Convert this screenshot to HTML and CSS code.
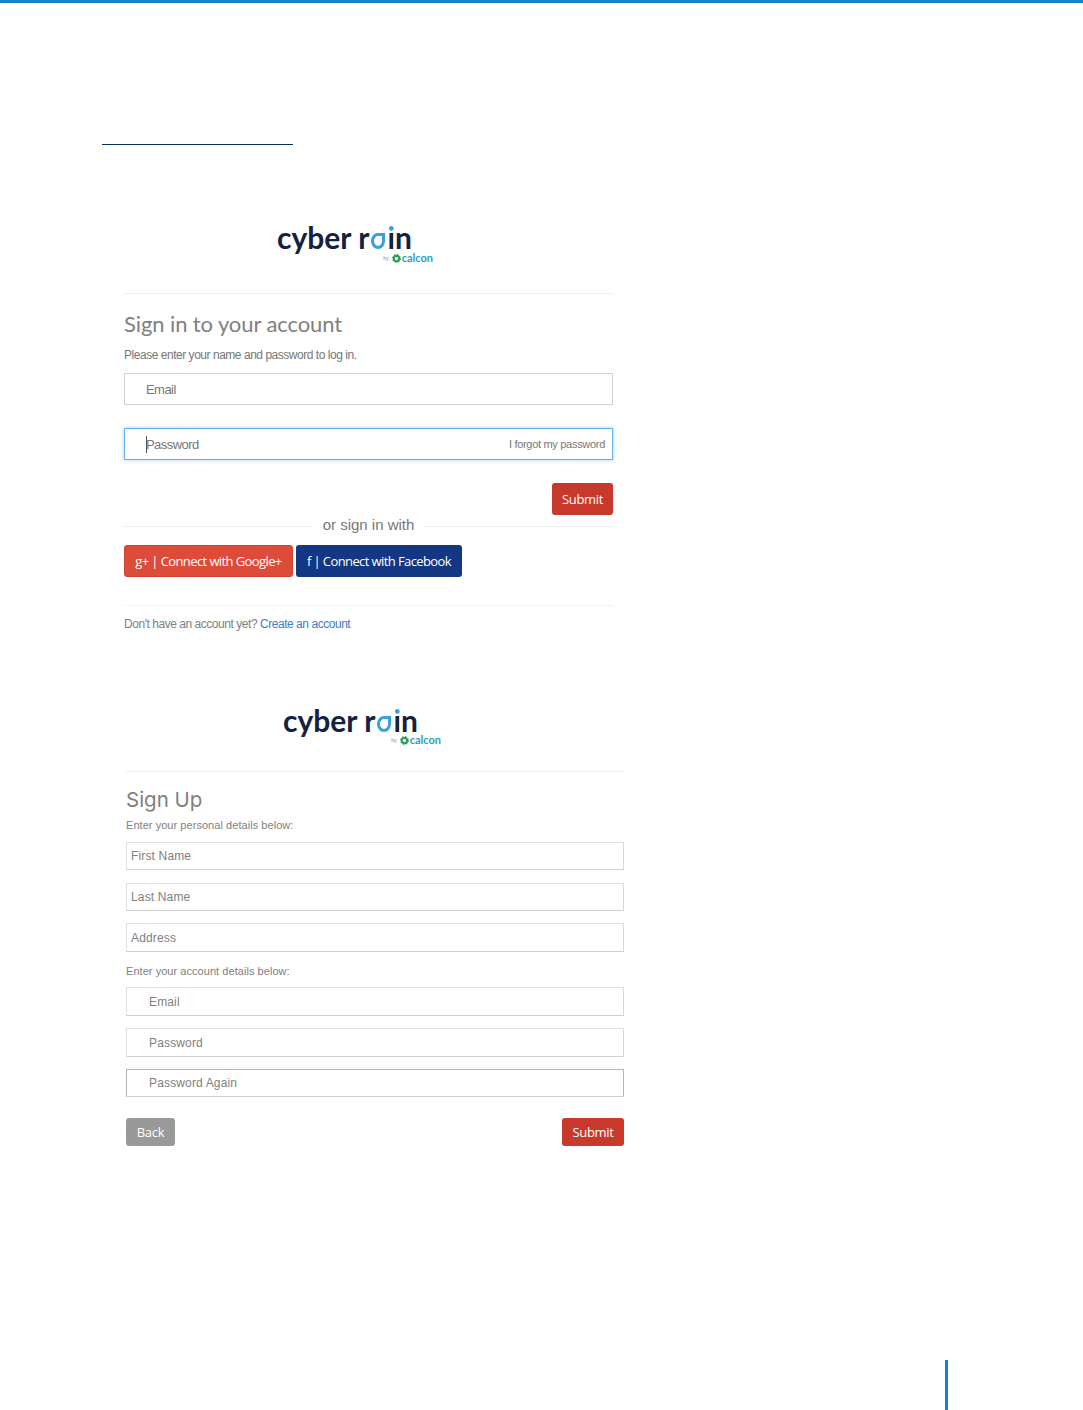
FILE: index.html
```html
<!DOCTYPE html>
<html lang="en">
<head>
    <meta charset="UTF-8">
    <meta name="viewport" content="width=device-width, initial-scale=1.0">
    <title>Cyber Rain account screens</title>
    <link rel="stylesheet" href="styles.css">
</head>
<body>
    <div class="page">
        <div class="top-bar"></div>
        <div class="title-rule"></div>

        <section class="signin">
            <div class="logo-row">
                <div class="logo">
                    <div class="logo-name">cyber r<span class="logo-drop">a</span><span class="logo-i">i</span>n</div>
                    <div class="logo-by">
                        <span class="logo-by-word">by</span>
                        <svg class="logo-gear" viewBox="0 0 10 10"><circle cx="5" cy="5" r="3" fill="none" stroke="#2f9e58" stroke-width="2.4"/><circle cx="5" cy="5" r="4.2" fill="none" stroke="#2f9e58" stroke-width="1.4" stroke-dasharray="1.6 1.7"/></svg>
                        <span class="logo-calcon">calcon</span>
                    </div>
                </div>
            </div>

            <h2 class="signin-title">Sign in to your account</h2>
            <p class="signin-text">Please enter your name and password to log in.</p>

            <div class="field signin-field">Email</div>
            <div class="field signin-field is-focus">
                <span class="caret"></span>Password
                <span class="forgot">I forgot my password</span>
            </div>

            <div class="submit-row">
                <div class="btn btn-red">Submit</div>
            </div>

            <div class="or-row"><span>or sign in with</span></div>

            <div class="social-row">
                <div class="btn btn-google">g+ | Connect with Google+</div>
                <div class="btn btn-facebook">f | Connect with Facebook</div>
            </div>

            <p class="account-text">Don't have an account yet? <span class="account-link">Create an account</span></p>
        </section>

        <section class="signup">
            <div class="logo-row">
                <div class="logo">
                    <div class="logo-name">cyber r<span class="logo-drop">a</span><span class="logo-i">i</span>n</div>
                    <div class="logo-by">
                        <span class="logo-by-word">by</span>
                        <svg class="logo-gear" viewBox="0 0 10 10"><circle cx="5" cy="5" r="3" fill="none" stroke="#2f9e58" stroke-width="2.4"/><circle cx="5" cy="5" r="4.2" fill="none" stroke="#2f9e58" stroke-width="1.4" stroke-dasharray="1.6 1.7"/></svg>
                        <span class="logo-calcon">calcon</span>
                    </div>
                </div>
            </div>

            <h2 class="signup-title">Sign Up</h2>
            <p class="signup-text">Enter your personal details below:</p>
            <div class="field signup-field">First Name</div>
            <div class="field signup-field">Last Name</div>
            <div class="field signup-field tall">Address</div>

            <p class="signup-text second">Enter your account details below:</p>
            <div class="field signup-field indent">Email</div>
            <div class="field signup-field indent">Password</div>
            <div class="field signup-field indent dark">Password Again</div>

            <div class="signup-buttons">
                <div class="btn btn-grey">Back</div>
                <div class="btn btn-red">Submit</div>
            </div>
        </section>

        <div class="page-mark"></div>
    </div>
</body>
</html>
```

FILE: styles.css
```css
body {
    margin: 0;
    background-color: #ffffff;
    font-family: 'Liberation Sans', Arial, sans-serif;
    color: #777;
}

.page {
    height: 1410px;
    display: flex;
    flex-direction: column;
    overflow: hidden;
}

.top-bar {
    height: 3px;
    background-color: #0f86cc; /* Blue */
}

.title-rule {
    width: 191px;
    height: 1px;
    margin: 141px 0 0 102px;
    background-color: #0b2d5e;
}

/* logo */
.logo-row {
    border-bottom: 1px solid #f0f0f0;
}

.logo {
    width: 156px;
    color: #14213f;
}

.logo-name {
    font-family: 'Lato', sans-serif;
    font-weight: 700;
    font-size: 30px;
    line-height: 28px;
    white-space: nowrap;
}

.logo-drop {
    display: inline-block;
    width: 8px;
    height: 10px;
    margin: 0 2px;
    border: 3px solid #3aa0dc;
    border-radius: 50% 0 50% 50%;
    color: transparent;
    font-size: 10px;
    line-height: 10px;
    text-align: center;
    overflow: hidden;
}

.logo-i {
    background: linear-gradient(#3aa0dc 36%, #14213f 36%);
    -webkit-background-clip: text;
    background-clip: text;
    color: transparent;
}

.logo-by {
    display: flex;
    justify-content: flex-end;
    align-items: center;
    gap: 1px;
    height: 10px;
    margin-top: 2px;
}

.logo-by-word {
    font-size: 5px;
    color: #888;
    margin-right: 2px;
}

.logo-gear {
    width: 9px;
    height: 9px;
}

.logo-calcon {
    font-family: 'Lato', sans-serif;
    font-weight: 700;
    font-size: 11px;
    line-height: 10px;
    color: #2c9fc4;
}

/* fields and buttons */
.field {
    position: relative;
    box-sizing: border-box;
    display: flex;
    align-items: center;
    background: #fff;
    border: 1px solid #d0d0d0;
    white-space: nowrap;
}

.btn {
    box-sizing: border-box;
    display: flex;
    align-items: center;
    justify-content: center;
    color: #fff;
    border-radius: 3px;
    font-family: 'Open Sans', sans-serif;
    font-size: 13px;
    letter-spacing: -0.3px;
    white-space: nowrap;
}

.btn-red {
    background-color: #c9392b; /* Red */
    width: 61px;
}

.btn-grey {
    background-color: #999;
    width: 49px;
}

.btn-google {
    background-color: #dd4b39;
    border: 1px solid #d0412f;
    width: 169px;
    letter-spacing: -0.6px;
}

.btn-facebook {
    background-color: #133783;
    width: 166px;
    letter-spacing: -0.6px;
}

/* sign in block */
.signin {
    width: 489px;
    margin: 70px 0 0 124px;
}

.signin .logo-row {
    height: 79px;
    padding: 8px 0 0 153px;
    box-sizing: border-box;
}

.signin-title {
    margin: 15px 0 0;
    font-family: 'Lato', sans-serif;
    font-weight: 400;
    font-size: 22px;
    line-height: 30px;
    letter-spacing: -0.1px;
    color: #808080;
}

.signin-text {
    margin: 8px 0 0;
    font-size: 12px;
    line-height: 16px;
    letter-spacing: -0.47px;
    color: #777;
}

.signin-field {
    height: 32px;
    margin-top: 10px;
    padding-left: 21px;
    font-size: 13px;
    letter-spacing: -0.55px;
    color: #777;
}

.signin-field + .signin-field {
    margin-top: 23px;
}

.is-focus {
    border-color: #66afe9;
    box-shadow: 0 0 4px rgba(102, 175, 233, 0.6);
}

.caret {
    position: absolute;
    left: 21px;
    top: 7px;
    width: 1px;
    height: 17px;
    background-color: #555;
}

.forgot {
    position: absolute;
    right: 7px;
    top: 9px;
    font-size: 11px;
    letter-spacing: -0.3px;
    color: #777;
}

.submit-row {
    display: flex;
    justify-content: flex-end;
    margin-top: 23px;
}

.submit-row .btn {
    height: 32px;
}

.or-row {
    position: relative;
    height: 20px;
    text-align: center;
    font-size: 15px;
    line-height: 20px;
    color: #777;
}

.or-row::before {
    content: "";
    position: absolute;
    left: 0;
    right: 0;
    top: 11px;
    border-top: 1px solid #eee;
}

.or-row span {
    position: relative;
    padding: 0 10px;
    background: #fff;
}

.social-row {
    display: flex;
    gap: 3px;
    height: 32px;
    margin-top: 10px;
}

.account-text {
    margin: 28px 0 0;
    padding-top: 10px;
    border-top: 1px dotted #e8e8e8;
    font-size: 12px;
    line-height: 16px;
    letter-spacing: -0.46px;
    color: #808080;
}

.account-link {
    color: #3c80c6;
}

/* sign up block */
.signup {
    width: 498px;
    margin: 70px 0 0 126px;
}

.signup .logo-row {
    height: 70px;
    padding: 4px 0 0 157px;
    box-sizing: border-box;
}

.signup .logo {
    width: 158px;
}

.signup .logo-by {
    margin-top: 1px;
}

.signup-title {
    margin: 14px 0 0;
    font-family: 'Inter', sans-serif;
    font-weight: 400;
    font-size: 20.5px;
    line-height: 28px;
    color: #808080;
}

.signup-text {
    margin: 4px 0 0;
    font-size: 11px;
    line-height: 14px;
    letter-spacing: 0.05px;
    color: #808080;
}

.signup-text.second {
    margin-top: 12px;
}

.signup-field {
    height: 28px;
    margin-top: 13px;
    padding-left: 4px;
    font-size: 12px;
    letter-spacing: 0.15px;
    color: #808080;
    border-color: #e0e0e0 #d8d8d8 #d0d0d0 #e0e0e0;
}

.signup-text + .signup-field {
    margin-top: 10px;
}

.signup-text.second + .signup-field {
    margin-top: 9px;
}

.signup-field.tall {
    height: 29px;
    margin-top: 12px;
}

.signup-field.indent {
    padding-left: 22px;
    height: 29px;
}

.signup-field.indent + .signup-field.indent {
    margin-top: 12px;
}

.signup-field.dark {
    height: 28px;
    border-color: #b5b5b5 #b5b5b5 #d0d0d0 #b5b5b5;
}

.signup-buttons {
    display: flex;
    justify-content: space-between;
    margin-top: 21px;
}

.signup-buttons .btn {
    height: 28px;
}

.signup-buttons .btn-red {
    width: 62px;
}

.page-mark {
    flex: none;
    width: 3px;
    height: 50px;
    margin: auto 0 0 945px;
    background-color: #0f86cc;
}
```
